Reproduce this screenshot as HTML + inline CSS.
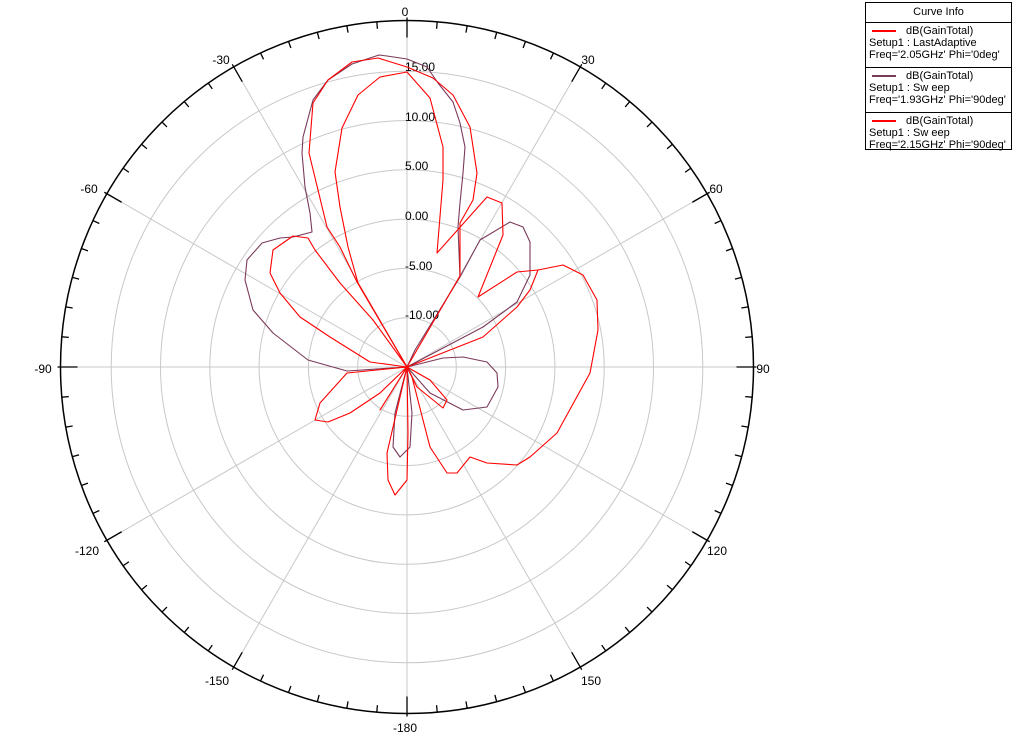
<!DOCTYPE html>
<html><head><meta charset="utf-8"><style>
html,body{margin:0;padding:0;background:#fff;}
svg{display:block;font-family:"Liberation Sans",Arial,sans-serif;}
.lg{position:absolute;left:865px;top:2px;width:147px;height:148px;border:1px solid #000;box-sizing:border-box;font-family:"Liberation Sans",Arial,sans-serif;font-size:11px;line-height:12px;color:#000;background:#fff;}
.lg .h{text-align:center;height:19px;line-height:19px;border-bottom:1px solid #000;}
.lg .e{padding:2px 3px 1px 3px;border-bottom:1px solid #000;height:41px;white-space:nowrap;}
.lg .e:last-child{border-bottom:none;}
.ln{display:inline-block;width:24px;height:2px;vertical-align:middle;margin:0 10px 0 3px;}
</style></head><body>
<div style="position:relative;width:1013px;height:740px;overflow:hidden">
<svg width="1013" height="740" viewBox="0 0 1013 740">
<g fill="none" stroke="#c8c8c8" stroke-width="1">
<circle cx="407" cy="367" r="49.3"/><circle cx="407" cy="367" r="98.6"/><circle cx="407" cy="367" r="147.9"/>
<circle cx="407" cy="367" r="197.2"/><circle cx="407" cy="367" r="246.5"/><circle cx="407" cy="367" r="295.8"/>
<g id="rad"></g>
</g>
<g id="ticks" stroke="#000" stroke-width="1.3"></g>
<circle cx="407" cy="367" r="346.5" fill="none" stroke="#000" stroke-width="1.5"/>
<g font-size="12" fill="#000" text-anchor="middle">
<text x="405" y="16">0</text><text x="588" y="64">30</text><text x="716" y="193">60</text><text x="763" y="373">90</text>
<text x="717" y="555">120</text><text x="591" y="685">150</text><text x="405" y="732">-180</text><text x="217" y="685">-150</text>
<text x="87" y="555">-120</text><text x="43" y="373">-90</text><text x="89" y="193">-60</text><text x="221" y="64">-30</text>
</g>
<g font-size="12" fill="#000">
<text x="405" y="71">15.00</text><text x="405" y="121">10.00</text><text x="405" y="170">5.00</text>
<text x="405" y="220">0.00</text><text x="405" y="270">-5.00</text><text x="405" y="319">-10.00</text>
</g>
<g fill="none" stroke-width="1.1" stroke-linejoin="round">
<polyline stroke="#7a3a5a" points="407,367 415,350 460,277 458,227 460,203 463,173 465,147 460,123 453,102 438,83 427,67 407,59 387,56 379,55 352,64 328,80 313,100 303,137 302,153 305,187 310,213 312,232 293,237 280,238 262,243 247,260 245,280 253,310 273,333 308,360 347,371 407,367 443,358 463,357 487,362 497,373 498,387 487,407 463,410 430,393 407,367 395,413 393,447 400,457 410,447 412,413 407,367 483,327 517,302 530,275 530,242 523,227 510,222 480,240 460,277"/>
<polyline stroke="#ff0000" points="407,367 358,283 348,247 340,207 335,172 342,128 358,95 380,77 407,72 430,98 443,147 443,180 437,253 487,197 502,203 503,235 478,297 517,272 538,270"/>
<polyline stroke="#ff0000" points="407,367 357,282 340,247 327,227 318,190 309,153 313,103 328,80 352,62 378,58 407,67 433,78 453,95 470,127 477,173 473,200 460,223 460,276 407,367"/>
<polyline stroke="#ff0000" points="407,367 370,362 330,337 300,317 280,293 270,273 273,250 293,236 308,238 315,250 340,283 373,320 407,367"/>
<polyline stroke="#ff0000" points="407,367 483,337 517,307 530,290 538,270 563,265 583,275 597,300 598,330 590,373 557,433 530,457 517,465 487,463 470,457 457,473 447,473 430,447 423,420 412,377 407,367"/>
<polyline stroke="#ff0000" points="407,367 397,410 387,453 388,480 395,495 407,480 408,433 407,367 430,380 447,400 443,408 417,387 407,367 347,373 320,403 315,420 328,422 350,413 380,393 407,367 380,410 407,367"/>
</g>
</svg>
<div class="lg">
<div class="h">Curve Info</div>
<div class="e"><span class="ln" style="background:#ff0000"></span>dB(GainTotal)<br>Setup1 : LastAdaptive<br>Freq='2.05GHz' Phi='0deg'</div>
<div class="e"><span class="ln" style="background:#7a3a5a"></span>dB(GainTotal)<br>Setup1 : Sw eep<br>Freq='1.93GHz' Phi='90deg'</div>
<div class="e"><span class="ln" style="background:#ff0000"></span>dB(GainTotal)<br>Setup1 : Sw eep<br>Freq='2.15GHz' Phi='90deg'</div>
</div>
</div>
<script>
var ns="http://www.w3.org/2000/svg",cx=407,cy=367,R=346.5;
var rad=document.getElementById("rad"),tk=document.getElementById("ticks");
for(var a=0;a<360;a+=5){var t=a*Math.PI/180,s=Math.sin(t),c=-Math.cos(t);
var l=document.createElementNS(ns,"line");var inner=(a%30==0)?R-17:R-7;var outer=(a%30==0)?R+3:R;
l.setAttribute("x1",cx+s*outer);l.setAttribute("y1",cy+c*outer);l.setAttribute("x2",cx+s*inner);l.setAttribute("y2",cy+c*inner);tk.appendChild(l);
if(a%30==0){var g=document.createElementNS(ns,"line");g.setAttribute("x1",cx);g.setAttribute("y1",cy);g.setAttribute("x2",cx+s*R);g.setAttribute("y2",cy+c*R);rad.appendChild(g);}}
</script>
</body></html>
